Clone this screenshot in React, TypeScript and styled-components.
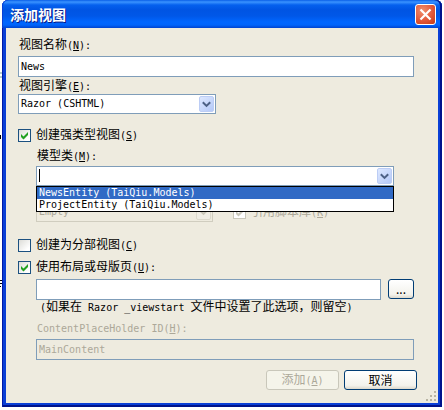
import React, { useState } from "react";
import styled, { createGlobalStyle, css } from "styled-components";

const cjk = `"Noto Sans CJK SC", "Liberation Sans", sans-serif`;
const mono = `"DejaVu Sans Mono", "Noto Sans CJK SC", monospace`;
const edge = "#7f9db9";
const face = "#eeebdf";

const GlobalStyle = createGlobalStyle`
  * { box-sizing: border-box; }
  body { margin: 0; background: #fff; font: 12px/14px ${cjk}; color: #000; }
  button, input, select { font: inherit; color: inherit; margin: 0; }
`;

const Dialog = styled.form`
  margin: 0 2px;
  padding: 0 4px 4px;
  background: #0a3fd6;
  border-radius: 6px 6px 0 0;
  box-shadow: inset 1px 0 #0019a8, inset -2px 0 #00138c, inset 0 -2px #00138c;
`;

const TitleBar = styled.header`
  display: flex;
  align-items: center;
  justify-content: space-between;
  height: 28px;
  margin: 0 -4px;
  padding: 0 6px 0 8px;
  border-radius: 6px 6px 0 0;
  background: linear-gradient(#0a5fe8 0, #3a93ff 2px, #0560ee 5px, #0054e3 10px, #0057e8 16px, #0066ff 22px, #0064fb 25px, #0043cf 28px);
  box-shadow: inset 1px 0 #0a3fd6, inset -2px 0 #00138c;
`;

const Title = styled.h1`
  margin: 0;
  font-size: 14px;
  line-height: 20px;
  font-weight: 700;
  color: #fff;
  text-shadow: 1px 1px #0a1883;
`;

const Close = styled.button`
  display: grid;
  place-items: center;
  width: 21px;
  height: 21px;
  margin-top: 1px;
  padding: 0;
  border: 1px solid #fff;
  border-radius: 3px;
  background: radial-gradient(circle at 35% 30%, #f0906f, #e2583a 55%, #c43a12);
`;

const Body = styled.main`
  display: flex;
  flex-direction: column;
  padding: 6px 24px 13px 12px;
  background: ${face};
  position: relative;
`;

const Label = styled.label<{ $h: number; $off?: boolean }>`
  display: flex;
  align-items: center;
  height: ${(p) => p.$h}px;
  padding-left: 1px;
  white-space: nowrap;
  ${(p) => p.$off && css`color: #aca899;`}
`;

const Latin = styled.span`
  font-family: ${mono};
  font-size: 10px;
  white-space: pre;
`;

const TextBox = styled.input`
  width: 100%;
  min-width: 0;
  height: 21px;
  padding: 0 2px;
  border: 1px solid ${edge};
  border-radius: 0;
  outline: 0;
  background: #fff;
  font-family: ${mono};
  font-size: 10px;
  &:disabled { background: ${face}; color: #aca899; }
`;

const Combo = styled.div<{ $off?: boolean; $w?: number }>`
  position: relative;
  display: flex;
  height: 20px;
  width: ${(p) => (p.$w ? p.$w + "px" : "auto")};
  border: 1px solid ${(p) => (p.$off ? "#d0cdbf" : edge)};
  background: ${(p) => (p.$off ? face : "#fff")};
  color: ${(p) => (p.$off ? "#aca899" : "#000")};
`;

const comboField = css`
  flex: 1;
  min-width: 0;
  padding: 0 2px;
  border: 0;
  outline: 0;
  appearance: none;
  background: transparent;
  font-family: ${mono};
  font-size: 10px;
  opacity: 1;
`;
const Select = styled.select`${comboField}`;
const ComboInput = styled.input`
  ${comboField}
  caret-color: transparent;
`;

const Caret = styled.span`
  position: absolute;
  top: 2px;
  left: 2px;
  width: 1px;
  height: 13px;
  background: #000;
`;

const Arrow = styled.button<{ $off?: boolean }>`
  display: grid;
  place-items: center;
  width: 15px;
  margin: 1px;
  padding: 0;
  border: 1px solid ${(p) => (p.$off ? "#dcd9cc" : "#bccdf5")};
  border-radius: 2px;
  background: ${(p) => (p.$off ? "#efede4" : "linear-gradient(135deg, #dde8ff, #b5c9f8)")};
  color: ${(p) => (p.$off ? "#c9c6b8" : "#4d6185")};
`;

const List = styled.ul`
  position: absolute;
  z-index: 1;
  top: 19px;
  left: -1px;
  right: -1px;
  margin: 0;
  padding: 0;
  list-style: none;
  border: 1px solid #000;
  background: #fff;
  color: #000;
`;

const Option = styled.li<{ $active: boolean }>`
  height: 12px;
  padding-left: 2px;
  font: 10px/12px ${mono};
  white-space: pre;
  ${(p) => p.$active && css`background: #316ac5; color: #fff;`}
`;

const CheckRow = styled.label<{ $off?: boolean }>`
  display: flex;
  align-items: center;
  gap: 5px;
  height: 22px;
  white-space: nowrap;
  ${(p) => p.$off && css`color: #aca899;`}
`;

const Check = styled.span`
  display: grid;
  width: 13px;
  height: 13px;
  > * { grid-area: 1 / 1; }
  svg { pointer-events: none; }
  input:not(:checked) + svg { visibility: hidden; }
`;

const Box = styled.input`
  appearance: none;
  width: 13px;
  height: 13px;
  border: 1px solid #1c5180;
  background: linear-gradient(135deg, #dcdcd7, #fff 80%);
  &:disabled { border-color: #cac8bb; background: #fff; }
`;

const Nested = styled.section<{ $inset?: number }>`
  display: flex;
  flex-direction: column;
  padding-left: 18px;
  padding-right: ${(p) => p.$inset ?? 0}px;
`;

const Group = styled.section<{ $gap: number }>`
  margin-top: ${(p) => p.$gap}px;
`;

const CoveredRow = styled.div`
  display: flex;
  align-items: center;
  gap: 20px;
  height: 20px;
  margin-top: 16px;
`;

const Short = styled.div`
  width: 198px;
`;

const PathRow = styled.div`
  display: flex;
  align-items: flex-start;
  gap: 7px;
  padding-top: 1px;
`;

const Button = styled.button`
  height: 20px;
  width: 73px;
  padding: 0;
  border: 1px solid #003c74;
  border-radius: 3px;
  background: linear-gradient(#fff, #f3f2ec 80%, #dcd8cc);
  line-height: 16px;
  &:disabled { border-color: #c9c7ba; background: #f5f4ea; color: #aca899; }
`;

const Browse = styled(Button)`
  flex: none;
  width: 26px;
`;

const Hint = styled.p`
  margin: 0 0 7px;
  padding-left: 4px;
  height: 12px;
  line-height: 12px;
  white-space: nowrap;
`;

const Footer = styled.footer`
  display: flex;
  justify-content: flex-end;
  gap: 5px;
  margin: 10px -3px 0 0;
`;

const Grip = styled.svg`
  position: absolute;
  right: 0;
  bottom: 0;
`;

const Behind = styled.svg`
  position: absolute;
  top: 0;
  left: 0;
`;

const Key = ({ k, colon }: { k: string; colon?: boolean }) => (
  <Latin>(<u>{k}</u>){colon ? ":" : ""}</Latin>
);

const Chevron = () => (
  <svg width="9" height="7" viewBox="0 0 9 7" fill="none" stroke="currentColor" strokeWidth="2">
    <path d="M.8 1.2 4.5 4.9 8.2 1.2" />
  </svg>
);

type CheckProps = { text: string; k: string; colon?: boolean; on?: boolean; off?: boolean };
const CheckField = ({ text, k, colon, on, off }: CheckProps) => (
  <CheckRow $off={off}>
    <Check>
      <Box type="checkbox" defaultChecked={on} disabled={off} />
      <svg width="13" height="13" viewBox="0 0 13 13">
        <path d="M3 5v3l2.500 2.500L10 6V3L5.500 7.500Z" fill={off ? "#cac8bb" : "#21a121"} />
      </svg>
    </Check>
    <span>{text}<Key k={k} colon={colon} /></span>
  </CheckRow>
);

const models = ["NewsEntity (TaiQiu.Models)", "ProjectEntity (TaiQiu.Models)"];
const gripDots = [[8, 0], [4, 4], [8, 4], [0, 8], [4, 8], [8, 8]];

export default function App() {
  const [active, setActive] = useState(0);
  return (
    <>
      <GlobalStyle />
      {/* Slivers of the editor window behind the dialog */}
      <Behind width="2" height="300" viewBox="0 0 2 300" aria-hidden="true">
        <path d="M0 73h2M0 77h2" stroke="#6f9a9a" />
        <path d="M0 135h1v4H0zM0 280h2v1H0zM0 283h2v1H0zM0 286h1v1H0z" />
      </Behind>
      <Dialog onSubmit={(e) => e.preventDefault()}>
        <TitleBar>
          <Title>添加视图</Title>
          <Close type="button" aria-label="关闭">
            <svg width="13" height="13" viewBox="0 0 13 13" stroke="#fff" strokeWidth="2.2">
              <path d="M1.500 1.500 11.500 11.500M11.500 1.500 1.500 11.500" />
            </svg>
          </Close>
        </TitleBar>
        <Body>
          <Label $h={22} htmlFor="name"><span>视图名称<Key k="N" colon /></span></Label>
          <TextBox id="name" defaultValue="News" />
          <Label $h={17} htmlFor="engine"><span>视图引擎<Key k="E" colon /></span></Label>
          <Short>
            <Combo>
              <Select id="engine"><option>Razor (CSHTML)</option></Select>
              <Arrow type="button" tabIndex={-1} aria-label="展开"><Chevron /></Arrow>
            </Combo>
          </Short>

          <Group $gap={10}>
            <CheckField text="创建强类型视图" k="S" on />
            <Nested $inset={20}>
              <Label $h={20} htmlFor="model"><span>模型类<Key k="M" colon /></span></Label>
              <Combo>
                <ComboInput id="model" role="combobox" aria-expanded="true" aria-controls="models" autoFocus />
                <Caret />
                <Arrow type="button" tabIndex={-1} aria-label="展开"><Chevron /></Arrow>
                <List id="models" role="listbox">
                  {models.map((m, i) => (
                    <Option key={m} role="option" aria-selected={i === active} $active={i === active} onMouseEnter={() => setActive(i)}>{m}</Option>
                  ))}
                </List>
              </Combo>
              <CoveredRow>
                <Combo $off $w={177}>
                  <Select disabled aria-label="支架模板"><option>Empty</option></Select>
                  <Arrow $off type="button" disabled aria-label="展开"><Chevron /></Arrow>
                </Combo>
                <CheckField text="引用脚本库" k="R" on off />
              </CoveredRow>
            </Nested>
          </Group>

          <Group $gap={12}>
            <CheckField text="创建为分部视图" k="C" />
            <CheckField text="使用布局或母版页" k="U" colon on />
            <Nested>
              <PathRow>
                <TextBox aria-label="布局页" />
                <Browse type="button">...</Browse>
              </PathRow>
              <Hint>
                <Latin>(</Latin>如果在<Latin> Razor _viewstart </Latin>文件中设置了此选项，则留空<Latin>)</Latin>
              </Hint>
              <Label $h={20} $off htmlFor="holder"><Latin>ContentPlaceHolder ID(<u>H</u>):</Latin></Label>
              <TextBox id="holder" defaultValue="MainContent" disabled />
            </Nested>
          </Group>

          <Footer>
            <Button type="submit" disabled>添加<Key k="A" /></Button>
            <Button type="button">取消</Button>
          </Footer>
          <Grip width="12" height="12" viewBox="0 0 12 12" fill="#b8b4a3">
            {gripDots.map(([x, y]) => <rect key={`${x}-${y}`} x={x} y={y} width="2" height="2" />)}
          </Grip>
        </Body>
      </Dialog>
    </>
  );
}
